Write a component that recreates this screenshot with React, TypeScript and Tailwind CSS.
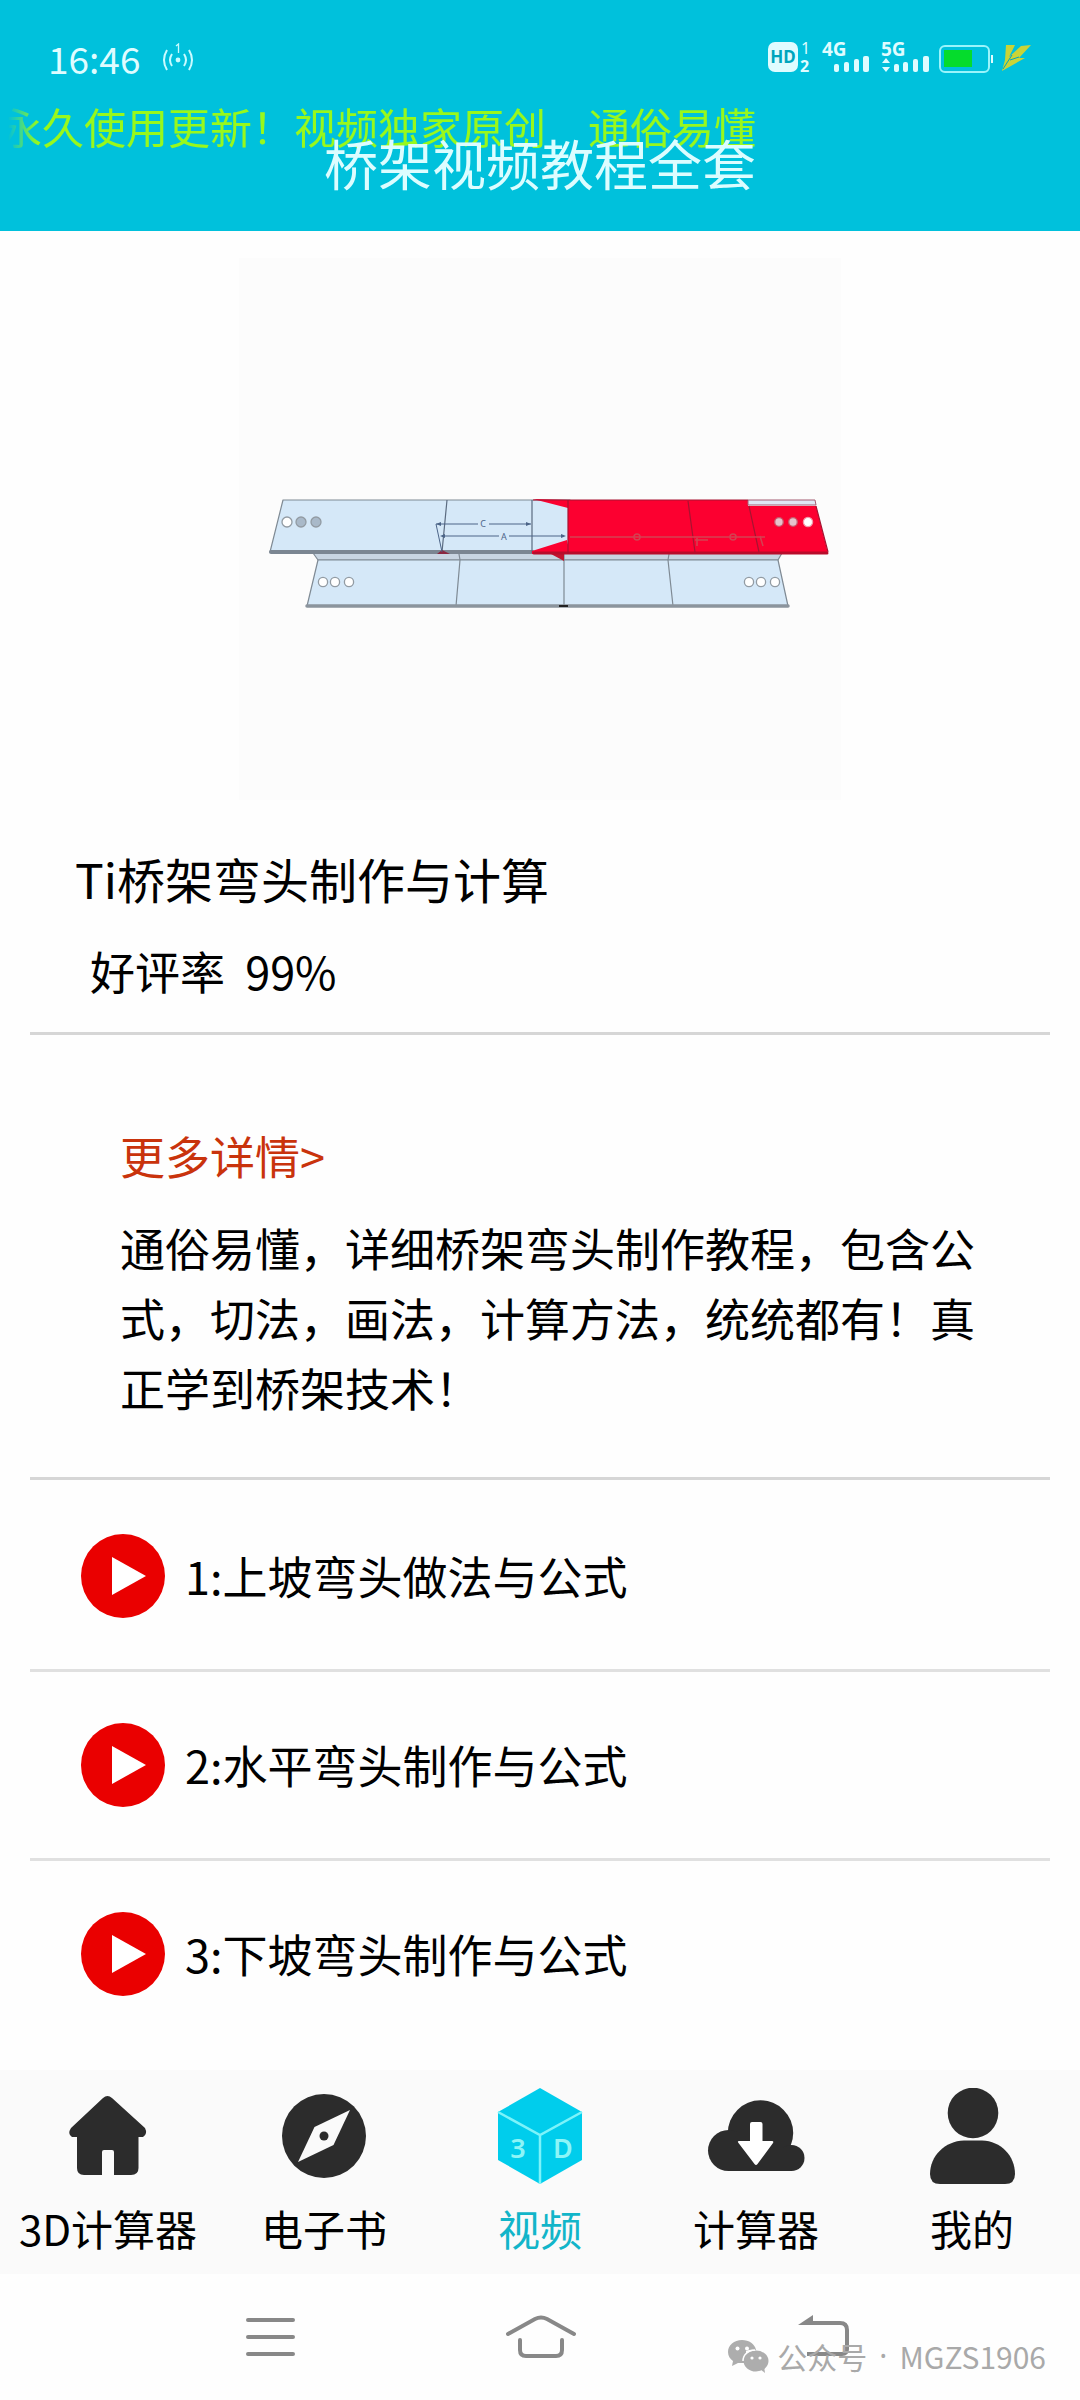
import React, { useState } from 'react';

interface IconProps {
  className?: string;
}

interface Lesson {
  id: number;
  title: string;
}

interface Tab {
  key: string;
  label: string;
  Icon: React.FC<IconProps>;
}

const cn = (...classes: Array<string | false | null | undefined>) =>
  classes.filter(Boolean).join(' ');

const HotspotIcon: React.FC<IconProps> = ({ className }) => (
  <svg className={className} viewBox="0 0 32 30" fill="none" stroke="#c9fbff" strokeWidth={2} aria-hidden="true">
    <path d="M5 7Q-1 17 5 27M10 11Q6 17 10 23M27 7Q33 17 27 27M22 11Q26 17 22 23" />
    <circle cx="16" cy="17" r="2.4" fill="#c9fbff" stroke="none" />
    <path d="M14 3L16.500 1V10" strokeWidth={1.3} />
  </svg>
);

const StatusIcons: React.FC<IconProps> = ({ className }) => (
  <svg
    className={className}
    viewBox="0 -10 264 54"
    fill="#dffcff"
    fontFamily="'Noto Sans', sans-serif"
    fontWeight={700}
    aria-hidden="true"
  >
    <rect x="0" y="1" width="30" height="30" rx="7" />
    <text x="15" y="22" fontSize="17" textAnchor="middle" fill="#00a5bd">HD</text>
    <text x="33" y="13" fontSize="16" fontWeight={400}>1</text>
    <text x="32" y="31" fontSize="16">2</text>
    <text x="54" y="15" fontSize="19">4G</text>
    <rect x="66" y="23" width="5" height="8" rx="2" />
    <rect x="76" y="21" width="5" height="10" rx="2" />
    <rect x="86" y="18" width="5" height="13" rx="2" />
    <rect x="95" y="15" width="6" height="16" rx="2" />
    <text x="113" y="15" fontSize="19">5G</text>
    <path d="M114 22L118 17L122 22ZM114 26H122L118 31Z" />
    <rect x="126" y="23" width="5" height="8" rx="2" />
    <rect x="135" y="21" width="5" height="10" rx="2" />
    <rect x="145" y="18" width="5" height="13" rx="2" />
    <rect x="155" y="15" width="6" height="16" rx="2" />
    <rect x="172" y="5" width="49" height="26" rx="5" fill="none" stroke="#9af4fb" strokeWidth="2" />
    <rect x="176" y="9" width="28" height="17" fill="#05dc2c" />
    <rect x="223" y="14" width="2" height="8" />
    {/* charging bolt, split by two thin cuts */}
    <path d="M238 4H247L241 16L253 5L263 4L251 17H257L234 30L237 19Z" fill="#c9d437" />
    <path d="M244 14L235 28M251 16L242 19" stroke="#00a5bd" strokeWidth="1" />
  </svg>
);

const HomeIcon: React.FC<IconProps> = ({ className }) => (
  <svg className={className} viewBox="0 0 108 96" fill="#2c2c2c" aria-hidden="true">
    <path d="M49 10Q53.500 6 58 10L91 40Q94 46 89 49H84.500V80Q84.500 87 77 87H60V64Q60 62 58 62H50Q48 62 48 64V87H30Q23 87 23 80V49H18Q13 46 17 40Z" />
  </svg>
);

const CompassIcon: React.FC<IconProps> = ({ className }) => (
  <svg className={className} viewBox="0 0 108 96" fill="#2c2c2c" aria-hidden="true">
    <circle cx="54" cy="48" r="42" />
    <path d="M80 22L63.500 57L28 74L44.500 39Z" fill="#fafafa" />
    <circle cx="54" cy="48" r="4.500" />
  </svg>
);

const CubeIcon: React.FC<IconProps> = ({ className }) => (
  <svg className={className} viewBox="0 0 108 96" aria-hidden="true">
    <path d="M54 0L96 24V72L54 96L12 72V24Z" fill="#00cdec" />
    <path d="M12 24L54 47L96 24M54 47V96" fill="none" stroke="#7cf3fa" strokeWidth="2.500" />
    <g fill="#8df5f7" fontFamily="'Noto Sans', sans-serif" fontSize="27" fontWeight={600} textAnchor="middle">
      <text x="32" y="70">3</text>
      <text x="77" y="70">D</text>
    </g>
  </svg>
);

const CloudIcon: React.FC<IconProps> = ({ className }) => (
  <svg className={className} viewBox="0 0 108 96" fill="#2c2c2c" aria-hidden="true">
    <circle cx="58.500" cy="45" r="32.700" />
    <circle cx="26.500" cy="62.500" r="20.500" />
    <circle cx="89.500" cy="70" r="13" />
    <path d="M26 60H90V83H26Z" />
    <path d="M50 34H58.500Q60.500 34 60.500 36V53H70Q72 53 71 55L55.500 76Q54 78 52.500 76L36.500 55Q35 53 37 53H48V36Q48 34 50 34Z" fill="#fff" />
  </svg>
);

const UserIcon: React.FC<IconProps> = ({ className }) => (
  <svg className={className} viewBox="0 0 108 96" fill="#2c2c2c" aria-hidden="true">
    <circle cx="55" cy="25" r="25.300" />
    <path d="M46 52.500H64C83 53 97 68 97 86Q97 96 87 96H22Q12 96 12 86C12 68 27 53 46 52.500Z" />
  </svg>
);

const PlayIcon: React.FC<IconProps> = ({ className }) => (
  <svg className={className} viewBox="0 0 84 84" aria-hidden="true">
    <circle cx="42" cy="42" r="42" fill="#ea0000" />
    <path d="M31 23L65 42L31 61Z" fill="#fff" />
  </svg>
);

const WechatIcon: React.FC<IconProps> = ({ className }) => (
  <svg className={className} viewBox="0 0 42 34" fill="#adadad" aria-hidden="true">
    <path d="M14 1C6 1 0 6 0 13C0 17 2 20 5 22L4 27L10 24H18V12Q22 10 28 11C27 5 21 1 14 1Z" />
    <ellipse cx="28" cy="22" rx="12.500" ry="10.500" />
    <path d="M32 30L37 34L36 27Z" />
    <g fill="#fff">
      <circle cx="9.500" cy="9.500" r="2" />
      <circle cx="19" cy="9.500" r="2" />
      <circle cx="24" cy="19" r="1.600" />
      <circle cx="32" cy="19" r="1.600" />
    </g>
    <path d="M27 11C20 11 15 16 15 22" fill="none" stroke="#fff" strokeWidth="1.500" />
  </svg>
);

// Unfolded cable tray with the bend section marked in red
const TrayDrawing: React.FC<IconProps> = ({ className }) => (
  <svg className={className} viewBox="9 -212 602 542" role="img" aria-label="桥架弯头">
    <g stroke="#7f8a94" strokeWidth="1.200" strokeLinejoin="round">
      <path d="M83 83L88 90H548L552 83Z" fill="#c8d5e2" />
      <path d="M88 90H548L558 136H77Z" fill="#d5e8f8" />
      <path d="M229 84L230 90L226 136M439 84L438 90L443 136M334 84V136" fill="none" />
      <path d="M77 136H558" stroke="#8b949d" strokeWidth="3.500" strokeLinecap="round" />
      <path d="M53 30H340V82H40Z" fill="#d5e8f8" />
      <path d="M41 82H303" stroke="#7b8692" strokeWidth="4" strokeLinecap="round" />
      <path d="M217 30L212 82M302 30V83" stroke="#5b6b80" fill="none" />
    </g>
    <path d="M329 136H338" stroke="#222" strokeWidth="2" />
    <g fill="#fc0030">
      <path d="M303 29L338 30V38ZM302 81L337 70L340 84H302Z" />
      <path d="M338 30H518V36H586L598 83H338Z" />
      <path d="M321 84L334 91V84Z" fill="#c3132e" />
      <path d="M207 84L212 80L220 84Z" fill="#8a2740" />
    </g>
    <path d="M518 30H585L586 35H518Z" fill="#dfe7f5" stroke="#a55d72" strokeWidth="1" />
    <path d="M304 83H597" stroke="#b80c2b" strokeWidth="3" strokeLinecap="round" />
    <path d="M303 30H518M338 30V84M458 31L465 82M519 36L529 82M586 36L598 82" fill="none" stroke="#a71331" strokeWidth="1.200" />
    <path d="M340 67H535M465 70H478M467 68V76M530 66L533 76" fill="none" stroke="#d34152" strokeWidth="1.500" />
    <g fill="none" stroke="#d34152" strokeWidth="1.500">
      <circle cx="407" cy="67" r="3" />
      <circle cx="503" cy="67" r="3" />
    </g>
    <g stroke="#4c6488" strokeWidth="1" fill="#4c6488">
      <path d="M206 54H248M259 54H301M212 66H269M279 66H334M206 54L212 82" fill="none" />
      <path d="M206 54L211 52V56ZM301 54L296 52V56ZM210 66L215 64V68ZM336 66L331 64V68Z" stroke="none" />
    </g>
    <g fill="#4c6488" fontFamily="'Noto Sans', sans-serif" fontSize="9" textAnchor="middle">
      <text x="253" y="57">C</text>
      <text x="274" y="70">A</text>
    </g>
    <g fill="#fff" stroke="#929ba3" strokeWidth="1.300">
      <circle cx="57" cy="52" r="5" />
      <circle cx="71" cy="52" r="5" fill="#a9b9c9" />
      <circle cx="86" cy="52" r="5" fill="#a9b9c9" />
      <circle cx="93" cy="112" r="4.600" />
      <circle cx="105" cy="112" r="4.600" />
      <circle cx="119" cy="112" r="4.600" />
      <circle cx="519" cy="112" r="4.600" />
      <circle cx="531" cy="112" r="4.600" />
      <circle cx="545" cy="112" r="4.600" />
      <circle cx="549" cy="52" r="4.300" fill="#e5c3cc" stroke="#c65a6b" />
      <circle cx="563" cy="52" r="4.300" fill="#e5c3cc" stroke="#c65a6b" />
      <circle cx="578" cy="52" r="4.600" stroke="#f09aa8" />
    </g>
  </svg>
);

const lessons: Lesson[] = [
  { id: 1, title: '上坡弯头做法与公式' },
  { id: 2, title: '水平弯头制作与公式' },
  { id: 3, title: '下坡弯头制作与公式' }
];

const tabs: Tab[] = [
  { key: 'calc3d', label: '3D计算器', Icon: HomeIcon },
  { key: 'ebook', label: '电子书', Icon: CompassIcon },
  { key: 'video', label: '视频', Icon: CubeIcon },
  { key: 'calc', label: '计算器', Icon: CloudIcon },
  { key: 'me', label: '我的', Icon: UserIcon }
];

const Header: React.FC = () => (
  <header className="relative bg-[#00c1dc] pb-[28px]">
    <div className="flex h-[116px] items-center justify-between px-12">
      <div className="flex items-center gap-[22px] text-[#dffcff]">
        <span className="text-[37px] leading-[40px]">16:46</span>
        <HotspotIcon className="h-[30px] w-8" />
      </div>
      <StatusIcons className="h-[54px] w-[264px]" />
    </div>
    {/* scrolling notice runs underneath the title */}
    <div className="absolute left-0 top-[96px] w-full overflow-hidden whitespace-pre text-[42px] leading-[60px] text-[#98f81c] [mask-image:linear-gradient(to_right,transparent_8px,black_38px)]">
      永久使用更新！视频独家原创　通俗易懂
    </div>
    <h1 className="relative pt-[7px] text-center text-[54px] leading-[80px] text-[#dcfdff]">
      桥架视频教程全套
    </h1>
  </header>
);

const LessonRow: React.FC<{ lesson: Lesson }> = ({ lesson }) => (
  <li>
    <button type="button" className="flex h-[186px] w-full items-center gap-5 pl-[51px] text-left">
      <PlayIcon className="h-[84px] w-[84px] shrink-0" />
      <span className="text-[45px] leading-[70px]">
        {lesson.id}:{lesson.title}
      </span>
    </button>
  </li>
);

const TabBar: React.FC = () => {
  const [active, setActive] = useState('video');

  return (
    <nav className="grid grid-cols-5 bg-[#fafafa]">
      {tabs.map(({ key, label, Icon }) => (
        <button
          key={key}
          type="button"
          onClick={() => setActive(key)}
          className={cn(
            'flex flex-col items-center gap-[14px] pt-[18px] pb-4 text-[42px] leading-[60px] whitespace-nowrap',
            active === key ? 'text-[#12b5c9]' : 'text-black'
          )}
        >
          <Icon className="h-24 w-[108px]" />
          {label}
        </button>
      ))}
    </nav>
  );
};

const SystemBar: React.FC = () => (
  <div className="relative grid h-[126px] grid-cols-3 place-items-center bg-[#fefefe] px-[135px]">
    <button type="button" aria-label="菜单">
      <svg className="h-11 w-20" viewBox="0 0 80 44" stroke="#888" strokeWidth="4" strokeLinecap="round">
        <path d="M18 5H63M18 22H63M18 39H63" />
      </svg>
    </button>
    <button type="button" aria-label="主页">
      <svg className="h-11 w-20" viewBox="0 0 80 44" fill="none" stroke="#888" strokeWidth="4" strokeLinecap="round">
        <path d="M8 19L35 4Q41 1 47 4L74 19M20 25V35Q20 41 26 41H56Q62 41 62 35V25" />
      </svg>
    </button>
    <button type="button" aria-label="返回">
      <svg className="h-11 w-20" viewBox="0 0 80 44" fill="none" stroke="#888" strokeWidth="4">
        <path d="M36 8H70Q77 8 77 15V34Q77 39 72 39H37" />
        <path d="M28 10L43 0V10Z" fill="#888" stroke="none" />
      </svg>
    </button>
    <div className="pointer-events-none absolute bottom-[26px] right-[34px] flex items-center gap-[7px] text-[30px] leading-9 text-[#a9a9a9]">
      <WechatIcon className="h-[34px] w-[42px]" />
      <div className="flex gap-3">
        <span>公众号</span>
        <span className="font-['Noto_Sans',sans-serif]">·</span>
        <span>MGZS1906</span>
      </div>
    </div>
  </div>
);

export default function App() {
  return (
    <div className="flex min-h-screen flex-col bg-[#fefefe] font-['Noto_Sans_CJK_SC',sans-serif] text-black">
      <Header />

      <main className="flex-1 px-[30px]">
        <div className="mx-auto mt-[27px] w-[602px] max-w-full bg-[#fcfcfc]">
          <TrayDrawing className="block h-auto w-full" />
        </div>

        <section className="mt-[42px] border-b-[3px] border-[#d6d6d6] pb-[25px] pl-[45px]">
          <h2 className="text-[48px] leading-[72px]">Ti桥架弯头制作与计算</h2>
          <p className="mt-[21px] whitespace-pre pl-[15px] text-[45px] leading-[72px]">好评率  99%</p>
        </section>

        <section className="border-b-[3px] border-[#d6d6d6] pt-[86px] pr-[60px] pb-[54px] pl-[90px] text-[45px] leading-[70px]">
          <a href="#details" className="block text-[#c9330c]">更多详情&gt;</a>
          <p className="mt-[22px]">
            通俗易懂，详细桥架弯头制作教程，包含公式，切法，画法，计算方法，统统都有！真正学到桥架技术！
          </p>
        </section>

        <ul className="divide-y-[3px] divide-[#e0e0e0] pt-[3px]">
          {lessons.map((lesson) => (
            <LessonRow key={lesson.id} lesson={lesson} />
          ))}
        </ul>
      </main>

      <TabBar />
      <SystemBar />
    </div>
  );
}
